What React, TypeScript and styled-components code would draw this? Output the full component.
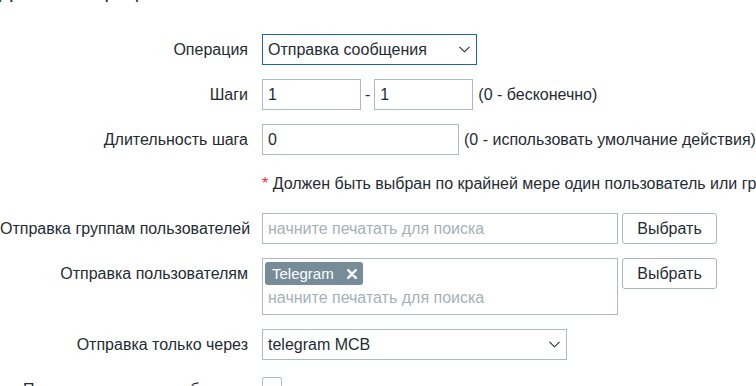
import React from "react";
import styled, { createGlobalStyle } from "styled-components";

const GlobalStyle = createGlobalStyle`
  html, body {
    margin: 0;
    padding: 0;
    overflow: hidden;
    background: #ffffff;
  }

  body {
    font-family: "Liberation Sans", Arial, sans-serif;
    font-size: 16px;
    color: #1f2c33;
  }
`;

const Page = styled.div`
  width: 756px;
  height: 386px;
  overflow: hidden;
`;

const Title = styled.h2`
  margin: -19px 0 0 -1px;
  font-size: 20px;
  line-height: 20px;
  font-weight: normal;
  color: #1f2c33;
  white-space: nowrap;
`;

const Form = styled.div`
  display: grid;
  grid-template-columns: 248px auto;
  column-gap: 14px;
  row-gap: 14px;
  margin-top: 33px;
`;

const Label = styled.div`
  text-align: right;
  line-height: 31px;
  white-space: nowrap;
`;

const Field = styled.div<{ $gap?: number }>`
  display: flex;
  align-items: flex-start;
  gap: ${({ $gap }) => $gap ?? 4}px;
  white-space: nowrap;
`;

const TextBox = styled.div<{ $width: number; $focused?: boolean }>`
  box-sizing: border-box;
  width: ${({ $width }) => $width}px;
  height: 31px;
  line-height: 29px;
  padding: 0 6px 0 5px;
  border: 1px solid ${({ $focused }) => ($focused ? "#1d67a8" : "#acbbc2")};
  background: #ffffff;
  display: flex;
  align-items: center;
  justify-content: space-between;
  white-space: nowrap;
`;

const Placeholder = styled.span`
  color: #a5b1b8;
`;

const Dash = styled.span`
  line-height: 31px;
`;

const Hint = styled.span`
  line-height: 31px;
  margin-left: 1px;
`;

const Note = styled.div`
  grid-column: 2;
  line-height: 30px;
  white-space: nowrap;
`;

const Star = styled.span`
  color: #e33734;
`;

const MultiSelect = styled.div`
  box-sizing: border-box;
  width: 356px;
  height: 57px;
  padding: 3px 2px;
  border: 1px solid #acbbc2;
  display: flex;
  flex-direction: column;
  align-items: flex-start;
`;

const Tag = styled.span`
  box-sizing: border-box;
  height: 23px;
  padding: 0 6px 0 7px;
  border-radius: 3px;
  background: #768d99;
  color: #ffffff;
  font-size: 15px;
  display: inline-flex;
  align-items: center;
  gap: 13px;
`;

const SearchLine = styled.div`
  line-height: 26px;
  padding-left: 3px;
`;

const Button = styled.button`
  box-sizing: border-box;
  width: 95px;
  height: 31px;
  border: 1px solid #a8b6bd;
  border-radius: 3px;
  background: #ffffff;
  color: #1f2c33;
  font-family: inherit;
  font-size: 16px;
  padding: 0;
`;

const Checkbox = styled.span`
  box-sizing: border-box;
  width: 20px;
  height: 20px;
  margin-top: 3px;
  border: 1px solid #acbbc2;
  border-radius: 2px;
  background: #ffffff;
`;

const Chevron = () => (
  <svg width="11" height="7" viewBox="0 0 11 7">
    <polyline
      points="0.5,0.8 5.5,5.8 10.5,0.8"
      fill="none"
      stroke="#1f2c33"
      strokeWidth="1.1"
    />
  </svg>
);

const RemoveIcon = () => (
  <svg width="10" height="10" viewBox="0 0 10 10">
    <path
      d="M1.2 1.2 L8.8 8.8 M8.8 1.2 L1.2 8.8"
      stroke="#ffffff"
      strokeWidth="2.4"
      strokeLinecap="round"
    />
  </svg>
);

export default function App() {
  return (
    <Page>
      <GlobalStyle />
      <Title>Детали операции</Title>

      <Form>
        <Label>Операция</Label>
        <Field>
          <TextBox $width={215} $focused>
            Отправка сообщения
            <Chevron />
          </TextBox>
        </Field>

        <Label>Шаги</Label>
        <Field>
          <TextBox $width={99}>1</TextBox>
          <Dash>-</Dash>
          <TextBox $width={99}>1</TextBox>
          <Hint>(0 - бесконечно)</Hint>
        </Field>

        <Label>Длительность шага</Label>
        <Field>
          <TextBox $width={197}>0</TextBox>
          <Hint>(0 - использовать умолчание действия)</Hint>
        </Field>

        <Note>
          <Star>*</Star> Должен быть выбран по крайней мере один пользователь или группа пользователей.
        </Note>

        <Label>Отправка группам пользователей</Label>
        <Field>
          <TextBox $width={356}>
            <Placeholder>начните печатать для поиска</Placeholder>
          </TextBox>
          <Button>Выбрать</Button>
        </Field>

        <Label>Отправка пользователям</Label>
        <Field>
          <MultiSelect>
            <Tag>
              Telegram
              <RemoveIcon />
            </Tag>
            <SearchLine>
              <Placeholder>начните печатать для поиска</Placeholder>
            </SearchLine>
          </MultiSelect>
          <Button>Выбрать</Button>
        </Field>

        <Label>Отправка только через</Label>
        <Field>
          <TextBox $width={305}>
            telegram MCB
            <Chevron />
          </TextBox>
        </Field>

        <Label>Пользовательское сообщение</Label>
        <Field>
          <Checkbox />
        </Field>
      </Form>
    </Page>
  );
}
